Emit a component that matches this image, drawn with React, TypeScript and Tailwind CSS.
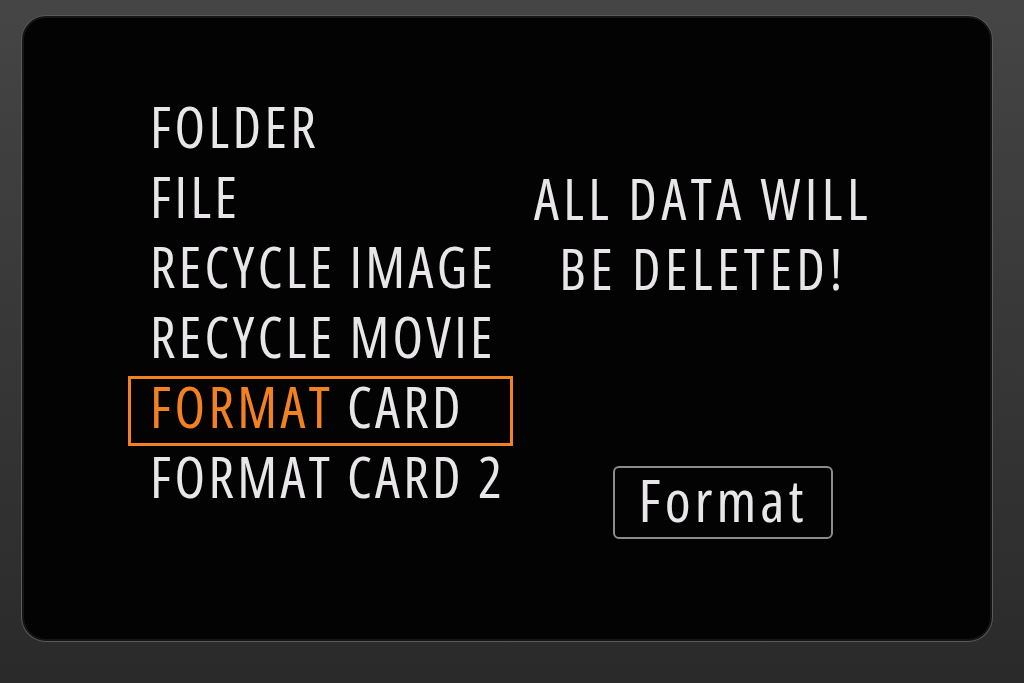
export default function App() {
  const font = { fontFamily: '"Open Sans", "Noto Sans", sans-serif' };
  return (
    <div
      className="w-[1024px] h-[683px] bg-linear-to-b from-[#454545] to-[#2a2a2a] flex pl-[22px] pr-[32px] pt-[16px] pb-[42px] whitespace-nowrap"
      style={font}
    >
      <div className="flex-1 rounded-[24px] bg-[#030303] border-2 border-[#151515] shadow-[0_0_0_1px_#5a5a5a] flex pt-[73px] pl-[104px]">
        <div className="flex flex-col text-[#e8e6e8] text-[56px] leading-[70px] font-stretch-condensed tracking-[3.4px] w-[385px]">
          <div className="pl-[22px]">FOLDER</div>
          <div className="pl-[22px]">FILE</div>
          <div className="pl-[22px]">RECYCLE IMAGE</div>
          <div className="pl-[22px]">RECYCLE MOVIE</div>
          <div className="mt-[5px] border-[3px] border-[#f28122] pl-[19px] pb-[10px] leading-[54px]">
            <span className="text-[#f28122]">FORMAT</span> CARD
          </div>
          <div className="-mt-[5px] pl-[22px]">FORMAT CARD 2</div>
        </div>
        <div className="flex flex-col items-center flex-1 pr-[97px]">
          <div className="mt-[72px] text-center text-[#e8e6e8] text-[56px] leading-[70px] font-stretch-condensed tracking-[4.5px]">
            ALL DATA WILL
            <br />
            BE DELETED!
          </div>
          <div className="mt-[163px] ml-[40px] border-2 border-[#8c8c8c] rounded-[6px] w-[220px] h-[73px] flex items-center justify-center pb-[6px] text-[#e8e6e8] text-[59px] font-stretch-condensed tracking-[4px]">
            Format
          </div>
        </div>
      </div>
    </div>
  );
}
